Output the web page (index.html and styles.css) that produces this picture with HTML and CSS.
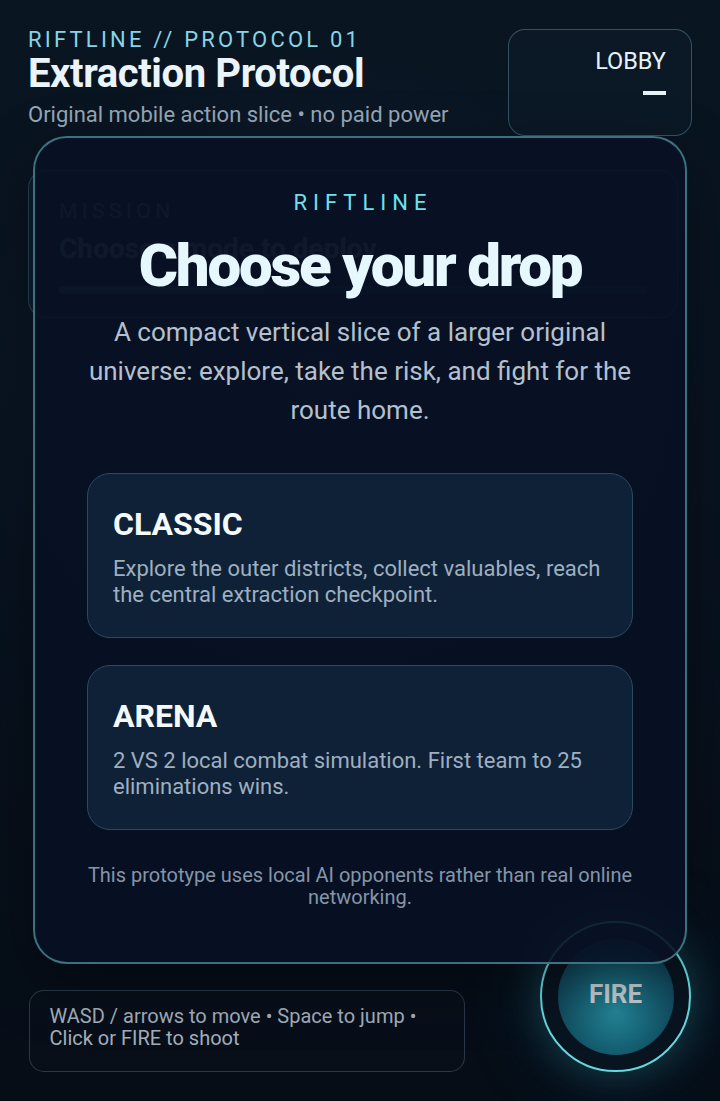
FILE: index.html
```html
<!DOCTYPE html>
<html lang="en">
<head>
<meta charset="utf-8">
<title>Extraction Protocol</title>
<link rel="stylesheet" href="styles.css">
</head>
<body>
<div class="app">
  <header class="top">
    <div class="brand">
      <div class="eyebrow">RIFTLINE // PROTOCOL 01</div>
      <h1 class="title">Extraction Protocol</h1>
      <p class="sub">Original mobile action slice • no paid power</p>
    </div>
    <button class="lobby" type="button">
      <span class="lobby-label">LOBBY</span>
      <span class="lobby-dash"></span>
    </button>
  </header>

  <section class="mission">
    <div class="mission-label">MISSION</div>
    <div class="mission-title">Choose a mode to deploy</div>
    <div class="mission-bar"><div class="mission-fill" style="width:35%"></div></div>
  </section>

  <div class="stage"></div>

  <footer class="controls">
    <div class="hint">WASD / arrows to move • Space to jump • Click or FIRE to shoot</div>
    <button class="fire" type="button"><span class="fire-core">FIRE</span></button>
  </footer>
</div>

<div class="modal" role="dialog">
  <div class="modal-kicker">RIFTLINE</div>
  <h2 class="modal-title">Choose your drop</h2>
  <p class="modal-lead">A compact vertical slice of a larger original universe: explore, take the risk, and fight for the route home.</p>
  <div class="modes">
    <button class="mode" type="button">
      <span class="mode-name">CLASSIC</span>
      <span class="mode-desc">Explore the outer districts, collect valuables, reach the central extraction checkpoint.</span>
    </button>
    <button class="mode" type="button">
      <span class="mode-name">ARENA</span>
      <span class="mode-desc">2 VS 2 local combat simulation. First team to 25 eliminations wins.</span>
    </button>
  </div>
  <p class="modal-note">This prototype uses local AI opponents rather than real online networking.</p>
</div>
</body>
</html>
```

FILE: styles.css
```css
* { box-sizing: border-box; }

html, body {
  margin: 0;
  width: 720px;
  height: 1101px;
  overflow: hidden;
}

body {
  position: relative;
  font-family: Roboto, "Liberation Sans", sans-serif;
  color: #e8f4fa;
  background:
    radial-gradient(ellipse 70% 45% at 45% 35%, rgba(20, 40, 62, 0.55), rgba(20, 40, 62, 0) 70%),
    linear-gradient(180deg, #0a1522 0%, #08121f 50%, #060d17 100%);
}

.app {
  height: 1101px;
  display: flex;
  flex-direction: column;
  padding: 28px 28px 29px 28px;
}

/* header */
.top {
  display: flex;
  justify-content: space-between;
  align-items: flex-start;
}

.eyebrow {
  font-size: 22px;
  line-height: 24px;
  letter-spacing: 3.2px;
  color: #86d4e6;
}

.title {
  margin: 0;
  font-size: 40px;
  line-height: 44px;
  font-weight: 700;
  color: #eaf4fa;
  letter-spacing: -0.4px;
}

.sub {
  margin: 6px 0 0;
  font-size: 22px;
  line-height: 26px;
  color: #98a6b6;
}

.lobby {
  margin-top: 1px;
  width: 184px;
  height: 107px;
  padding: 17px 25px 0 0;
  display: flex;
  flex-direction: column;
  align-items: flex-end;
  gap: 16px;
  border: 1.5px solid rgba(88, 140, 160, 0.5);
  border-radius: 17px;
  background: rgba(13, 26, 40, 0.7);
  font-family: inherit;
  cursor: pointer;
}

.lobby-label {
  font-size: 23.5px;
  line-height: 28px;
  color: #e6f2f8;
}

.lobby-dash {
  width: 23px;
  height: 4px;
  background: #e6f2f8;
}

/* mission card (behind the modal) */
.mission {
  margin-top: 34px;
  width: 650px;
  height: 148px;
  padding: 28px 30px 0;
  border: 1.5px solid rgba(70, 110, 130, 0.45);
  border-radius: 18px;
  background: rgba(16, 30, 46, 0.8);
}

.mission-label {
  font-size: 21px;
  line-height: 24px;
  letter-spacing: 4.5px;
  color: #4a5a6c;
}

.mission-title {
  margin-top: 10px;
  font-size: 28px;
  line-height: 32px;
  font-weight: 700;
  color: #56677a;
}

.mission-bar {
  margin-top: 21px;
  height: 8px;
  border-radius: 4px;
  background: rgba(40, 60, 80, 0.5);
}

.mission-fill {
  height: 100%;
  border-radius: 4px;
  background: #2a4058;
}

.stage { flex: 1; }

/* bottom controls */
.controls {
  display: flex;
  justify-content: space-between;
  align-items: flex-end;
}

.hint {
  margin-left: 1px;
  width: 436px;
  height: 82px;
  padding: 13.5px 18px 0 19.5px;
  border: 1.5px solid rgba(70, 95, 115, 0.55);
  border-radius: 15px;
  background: rgba(8, 16, 26, 0.7);
  font-size: 20px;
  line-height: 22px;
  color: #a3afbc;
}

.fire {
  margin-right: 1px;
  width: 151px;
  height: 151px;
  padding: 0;
  border-radius: 50%;
  border: 2px solid #64d9e0;
  background: #08141f;
  display: flex;
  align-items: center;
  justify-content: center;
  box-shadow: 0 0 40px rgba(60, 190, 210, 0.28), 0 0 90px rgba(40, 150, 180, 0.15);
  font-family: inherit;
  cursor: pointer;
}

.fire-core {
  width: 116px;
  height: 116px;
  border-radius: 50%;
  display: flex;
  align-items: center;
  justify-content: center;
  padding-bottom: 6px;
  background: radial-gradient(circle at 50% 62%, #23889a 0%, #186679 35%, #0f3e53 75%, #0c3145 100%);
  font-size: 26px;
  font-weight: 700;
  color: #c9d2d6;
}

/* modal overlay */
.modal {
  position: absolute;
  left: 33px;
  top: 136px;
  width: 654px;
  height: 828px;
  padding: 52px 44px 0;
  display: flex;
  flex-direction: column;
  align-items: center;
  border: 2px solid rgba(76, 148, 160, 0.75);
  border-radius: 34px;
  background: rgba(8, 17, 36, 0.9);
  box-shadow: 0 20px 60px rgba(0, 0, 0, 0.35);
  text-align: center;
}

.modal-kicker {
  font-size: 22px;
  line-height: 26px;
  letter-spacing: 6px;
  padding-left: 6px;
  color: #6fe0ee;
}

.modal-title {
  margin: 15.5px 0 0;
  font-size: 60px;
  line-height: 68px;
  font-weight: 900;
  letter-spacing: -2.2px;
  color: #e6f7fd;
}

.modal-lead {
  margin: 13px 0 0;
  width: 562px;
  font-size: 26px;
  line-height: 39px;
  color: #b4c0ce;
}

.modes {
  margin-top: 43.5px;
  width: 546px;
  display: flex;
  flex-direction: column;
  gap: 27px;
}

.mode {
  height: 165px;
  padding: 31.5px 25px 0;
  display: flex;
  flex-direction: column;
  align-items: flex-start;
  gap: 14.5px;
  text-align: left;
  border: 1.5px solid #2c4a5e;
  border-radius: 23px;
  background: #0f2137;
  font-family: inherit;
  cursor: pointer;
}

.mode-name {
  font-size: 32px;
  line-height: 36px;
  font-weight: 700;
  color: #f4f9fc;
}

.mode-desc {
  font-size: 22px;
  line-height: 26px;
  color: #9eafc0;
}

.modal-note {
  margin: 34px 0 0;
  width: 560px;
  font-size: 20px;
  line-height: 22px;
  color: #8595a8;
}
```
